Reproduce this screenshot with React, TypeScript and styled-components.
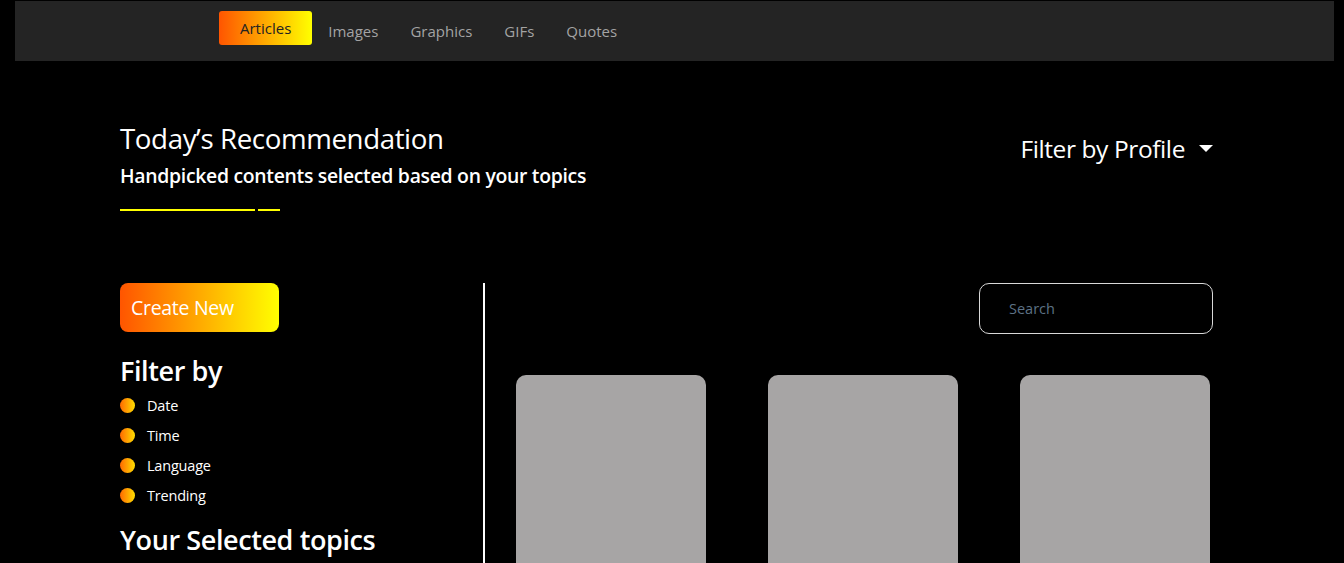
import * as React from 'react';
import styled, { createGlobalStyle } from 'styled-components';

const GlobalStyle = createGlobalStyle`
  * { box-sizing: border-box; }
  body {
    margin: 0;
    background: #000;
    color: #fff;
    font-family: "Open Sans", "Noto Sans", sans-serif;
  }
`

const Page = styled.div`
  min-height: 563px;
  overflow: hidden;
`

const NavBar = styled.nav`
  display: flex;
  align-items: center;
  height: 60px;
  margin: 1px 10px 0 15px;
  padding-left: 204px;
  background: #242424;
`

const NavLink = styled.a<{ active?: boolean }>`
  display: flex;
  align-items: center;
  height: 34px;
  padding: ${p => (p.active ? '0 21px' : '0 16px')};
  margin-top: ${p => (p.active ? '-6px' : '0')};
  border-radius: 3px;
  font-size: 15px;
  color: ${p => (p.active ? '#222' : '#a3a3a3')};
  background: ${p => (p.active ? 'linear-gradient(90deg, #ff5500, #ffff00)' : 'transparent')};
  cursor: pointer;
`

const Container = styled.div`
  padding: 0 131px 0 120px;
`

const Header = styled.header`
  display: flex;
  justify-content: space-between;
  align-items: flex-start;
  padding-top: 58px;
`

const Title = styled.h1`
  margin: 0;
  font-size: 27.7px;
  font-weight: 500;
  letter-spacing: -0.4px;
  line-height: 38px;
`

const Subtitle = styled.h2`
  margin: 5px 0 0;
  font-size: 19.4px;
  font-weight: 600;
  letter-spacing: -0.3px;
  line-height: 28px;
`

const Underline = styled.div`
  display: flex;
  gap: 3px;
  margin-top: 19px;
`

const Line = styled.span<{ w: number }>`
  display: block;
  width: ${p => p.w}px;
  height: 1.5px;
  background: #ffff00;
`

const ProfileToggle = styled.button`
  display: flex;
  align-items: center;
  margin-top: 13px;
  padding: 0;
  background: none;
  border: none;
  color: #fff;
  font-family: inherit;
  font-size: 24.5px;
  letter-spacing: -0.4px;
  cursor: pointer;

  &::after {
    content: '';
    margin-left: 14px;
    border-top: 7px solid #fff;
    border-left: 7px solid transparent;
    border-right: 7px solid transparent;
  }
`

const Main = styled.main`
  display: flex;
  margin-top: 72px;
`

const Sidebar = styled.aside`
  width: 365px;
  flex-shrink: 0;
  border-right: 2px solid #fff;
  min-height: 300px;
`

const CreateButton = styled.button`
  width: 159px;
  height: 49px;
  padding: 0 0 0 11px;
  text-align: left;
  border: none;
  border-radius: 8px;
  background: linear-gradient(90deg, #ff5500, #ffff00);
  color: #fff;
  font-family: inherit;
  font-size: 19.5px;
  letter-spacing: -0.3px;
`

const SectionTitle = styled.h3<{ top: number }>`
  margin: ${p => p.top}px 0 0;
  font-size: 27px;
  font-weight: 600;
  letter-spacing: -0.4px;
  line-height: 34px;
`

const FilterList = styled.ul`
  list-style: none;
  margin: 3px 0 0;
  padding: 0;
`

const FilterItem = styled.li`
  display: flex;
  align-items: center;
  gap: 12px;
  height: 30px;
  font-size: 14.5px;
  letter-spacing: -0.2px;
`

const Dot = styled.span`
  width: 15px;
  height: 15px;
  border-radius: 50%;
  background: linear-gradient(90deg, #ff6a00, #ffdd00);
`

const Content = styled.section`
  flex: 1;
  padding-left: 31px;
`

const SearchRow = styled.div`
  display: flex;
  justify-content: flex-end;
`

const SearchInput = styled.input`
  width: 234px;
  height: 51px;
  padding: 0 29px;
  background: #000;
  border: 1px solid #d8d8d8;
  border-radius: 10px;
  color: #fff;
  font-family: inherit;
  font-size: 14.5px;
  outline: none;

  &::placeholder {
    color: #5d7285;
  }
`

const CardGrid = styled.div`
  display: grid;
  grid-template-columns: repeat(3, 190px);
  column-gap: 62px;
  margin-top: 41px;
`

const Card = styled.div`
  height: 260px;
  border-radius: 10px;
  background: #a7a5a5;
`

const tabs = ['Articles', 'Images', 'Graphics', 'GIFs', 'Quotes'];
const filters = ['Date', 'Time', 'Language', 'Trending'];

export default function App() {
  return (
    <Page>
      <GlobalStyle />
      <NavBar>
        {tabs.map((t, i) => (
          <NavLink key={t} active={i === 0}>{t}</NavLink>
        ))}
      </NavBar>
      <Container>
        <Header>
          <div>
            <Title>Today’s Recommendation</Title>
            <Subtitle>Handpicked contents selected based on your topics</Subtitle>
            <Underline>
              <Line w={135} />
              <Line w={22} />
            </Underline>
          </div>
          <ProfileToggle>Filter by Profile</ProfileToggle>
        </Header>
        <Main>
          <Sidebar>
            <CreateButton>Create New</CreateButton>
            <SectionTitle top={22}>Filter by</SectionTitle>
            <FilterList>
              {filters.map(f => (
                <FilterItem key={f}>
                  <Dot />
                  {f}
                </FilterItem>
              ))}
            </FilterList>
            <SectionTitle top={12}>Your Selected topics</SectionTitle>
          </Sidebar>
          <Content>
            <SearchRow>
              <SearchInput placeholder="Search" />
            </SearchRow>
            <CardGrid>
              <Card />
              <Card />
              <Card />
            </CardGrid>
          </Content>
        </Main>
      </Container>
    </Page>
  );
}
